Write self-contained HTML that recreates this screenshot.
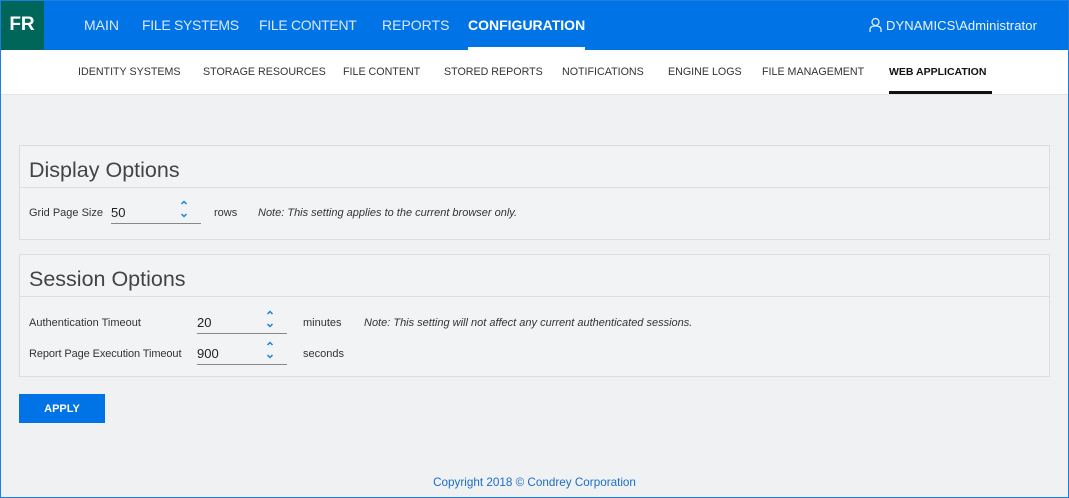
<!DOCTYPE html>
<html><head><style>
*{box-sizing:border-box;margin:0;padding:0}
body{width:1069px;height:498px;overflow:hidden;background:#f0f1f3;font-family:"Liberation Sans",sans-serif;position:relative}
.frame{position:absolute;left:0;top:0;width:1069px;height:498px;border:1px solid #1a7fe0;pointer-events:none;z-index:5}
.hdr{position:absolute;left:0;top:0;width:1069px;height:50px;background:#0073e6}
.logo{position:absolute;left:0;top:0;width:44px;height:50px;background:#00665a;color:#fff;font-weight:bold;font-size:19px;line-height:50px;text-align:center}
.nav{position:absolute;top:17px;font-size:14px;color:#dce9fa;white-space:nowrap}
.sub{position:absolute;left:0;top:50px;width:1069px;height:45px;background:#fff;border-bottom:1px solid #e2e4e7}
.s{position:absolute;top:16px;font-size:10.7px;color:#333;white-space:nowrap}
.panel{position:absolute;left:19px;width:1031px;border:1px solid #dcdde0;background:#f2f3f4}
.title{height:42px;border-bottom:1px solid #dcdde0;font-size:21.5px;color:#444;padding:12px 0 0 9px}
.l{position:absolute;font-size:11px;color:#333;white-space:nowrap}
.inp{position:absolute;border-bottom:1px solid #888;height:22px;font-size:13px;color:#222;padding-top:3px}
.ar{position:absolute;right:12px;top:-4px}
.note{position:absolute;font-size:11px;color:#333;font-style:italic;white-space:nowrap}
</style></head><body>
<div class="frame"></div>
<div class="hdr">
<div class="logo">FR</div>
<div class="nav" style="left:84px">MAIN</div>
<div class="nav" style="left:142px;letter-spacing:-0.3px">FILE SYSTEMS</div>
<div class="nav" style="left:259px;letter-spacing:-0.3px">FILE CONTENT</div>
<div class="nav" style="left:382px">REPORTS</div>
<div class="nav" style="left:468px;color:#fff;font-weight:bold;letter-spacing:0px">CONFIGURATION</div>
<div style="position:absolute;left:468px;top:47px;width:117px;height:3px;background:#fff"></div>
<svg style="position:absolute;left:869px;top:17px" width="13" height="15" viewBox="0 0 13 15"><circle cx="6.5" cy="5" r="3.5" fill="none" stroke="#e0ecfb" stroke-width="1.3"/><path d="M1 15V12.5Q1 9 6.5 9Q12 9 12 12.5V15" fill="none" stroke="#e0ecfb" stroke-width="1.3"/></svg>
<div class="nav" style="left:886px;top:18px;font-size:13px;color:#eef4fc;letter-spacing:0.1px">DYNAMICS\Administrator</div>
</div>
<div class="sub">
<div class="s" style="left:78px">IDENTITY SYSTEMS</div>
<div class="s" style="left:203px">STORAGE RESOURCES</div>
<div class="s" style="left:343px">FILE CONTENT</div>
<div class="s" style="left:444px">STORED REPORTS</div>
<div class="s" style="left:562px">NOTIFICATIONS</div>
<div class="s" style="left:668px">ENGINE LOGS</div>
<div class="s" style="left:762px">FILE MANAGEMENT</div>
<div class="s" style="left:889px;font-weight:bold;color:#111;font-size:10.5px">WEB APPLICATION</div>
<div style="position:absolute;left:889px;top:41px;width:103px;height:3px;background:#111"></div>
</div>
<div class="panel" style="top:145px;height:95px"><div class="title">Display Options</div>
<div class="l" style="left:9px;top:61px">Grid Page Size</div>
<div class="inp" style="left:91px;top:56px;width:90px">50<svg class="ar" width="10" height="22" viewBox="0 0 10 22"><path d="M2.5 6L5 3.5L7.5 6M2.5 16L5 18.5L7.5 16" fill="none" stroke="#1a7fe0" stroke-width="1.5"/></svg></div>
<div class="l" style="left:194px;top:61px">rows</div>
<div class="note" style="left:238px;top:61px">Note: This setting applies to the current browser only.</div>
</div>
<div class="panel" style="top:254px;height:123px"><div class="title">Session Options</div>
<div class="l" style="left:9px;top:62px">Authentication Timeout</div>
<div class="inp" style="left:177px;top:57px;width:90px">20<svg class="ar" width="10" height="22" viewBox="0 0 10 22"><path d="M2.5 6L5 3.5L7.5 6M2.5 16L5 18.5L7.5 16" fill="none" stroke="#1a7fe0" stroke-width="1.5"/></svg></div>
<div class="l" style="left:283px;top:62px">minutes</div>
<div class="note" style="left:344px;top:62px">Note: This setting will not affect any current authenticated sessions.</div>
<div class="l" style="left:9px;top:93px;letter-spacing:-0.1px">Report Page Execution Timeout</div>
<div class="inp" style="left:177px;top:88px;width:90px">900<svg class="ar" width="10" height="22" viewBox="0 0 10 22"><path d="M2.5 6L5 3.5L7.5 6M2.5 16L5 18.5L7.5 16" fill="none" stroke="#1a7fe0" stroke-width="1.5"/></svg></div>
<div class="l" style="left:283px;top:93px">seconds</div>
</div>
<div style="position:absolute;left:19px;top:394px;width:86px;height:29px;background:#0073e6;color:#fff;font-weight:bold;font-size:11px;text-align:center;line-height:30px">APPLY</div>
<div style="position:absolute;left:0;width:1069px;top:476px;text-align:center;font-size:11.7px;color:#1a6fc9">Copyright 2018 © Condrey Corporation</div>
</body></html>
